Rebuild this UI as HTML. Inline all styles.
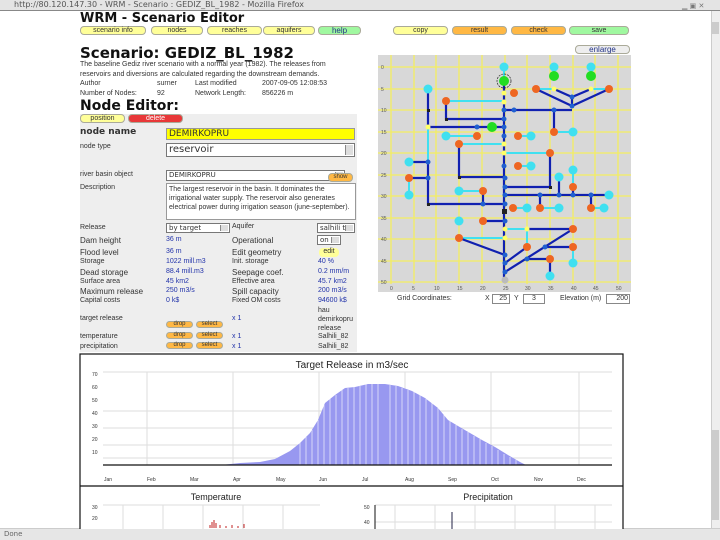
<!DOCTYPE html>
<html><head><style>
*{margin:0;padding:0;box-sizing:border-box}
body{width:720px;height:540px;overflow:hidden;background:#fff;font-family:"DejaVu Sans","Liberation Sans",sans-serif;position:relative;color:#333}
.a{position:absolute;white-space:nowrap}
.s{font-size:7px;font-family:"Liberation Sans",sans-serif}
.b{position:absolute;height:9px;border-radius:4px;border:1px solid #aa9;font-size:7px;text-align:center;line-height:7px;color:#333;font-family:"Liberation Sans",sans-serif}
.y{background:#ffff99}.o{background:#ffb844}.g{background:#a0f8a0}.r{background:#e83838;color:#fff}
.v{color:#23a}
.sel{position:absolute;background:#fff;border:1px solid #777;font-size:8px;padding-left:2px}
.sel:after{content:"";position:absolute;right:1px;top:1px;bottom:1px;width:7px;background:#ddd;border-left:1px solid #888}
</style></head><body>
<div class="a" style="left:0;top:0;width:720px;height:11px;background:#e4e4e4;border-bottom:1px solid #888;font-size:8px;color:#555;padding-left:14px;line-height:10px">http://80.120.147.30 - WRM - Scenario : GEDIZ_BL_1982 - Mozilla Firefox</div>
<div class="a" style="left:682px;top:2px;font-size:7px;color:#777">▁ ▣ ✕</div>
<div class="a" style="left:711px;top:11px;width:9px;height:518px;background:#eee;border-left:1px solid #ccc"></div>
<div class="a" style="left:712px;top:22px;width:7px;height:12px;background:#ccc"></div>
<div class="a" style="left:712px;top:430px;width:7px;height:90px;background:#ccc"></div>
<div class="a" style="left:0;top:528px;width:720px;height:12px;background:#e6e6e6;border-top:1px solid #ccc;font-size:7px;color:#666;padding-left:4px;line-height:11px">Done</div>

<div class="a" style="left:80px;top:11px;font-size:13px;font-weight:bold;color:#111">WRM - Scenario Editor</div>
<div class="b y" style="left:80px;top:26px;width:66px">scenario info</div>
<div class="b y" style="left:151px;top:26px;width:52px">nodes</div>
<div class="b y" style="left:207px;top:26px;width:55px">reaches</div>
<div class="b y" style="left:263px;top:26px;width:52px">aquifers</div>
<div class="b g" style="left:318px;top:26px;width:43px;font-size:8px;color:#238">help</div>
<div class="b y" style="left:393px;top:26px;width:55px">copy</div>
<div class="b o" style="left:452px;top:26px;width:55px">result</div>
<div class="b o" style="left:511px;top:26px;width:55px">check</div>
<div class="b g" style="left:569px;top:26px;width:60px">save</div>
<div class="b" style="left:575px;top:45px;width:55px;background:#eee;color:#238;font-size:8px">enlarge</div>

<div class="a" style="left:80px;top:44px;font-size:15px;font-weight:bold;color:#111">Scenario: GEDIZ_BL_1982</div>
<div class="a s" style="left:80px;top:60px;line-height:10px">The baseline Gediz river scenario with a normal year (1982). The releases from<br>reservoirs and diversions are calculated regarding the downstream demands.</div>
<div class="a s" style="left:80px;top:80px">Author</div><div class="a s" style="left:157px;top:80px">surner</div><div class="a s" style="left:195px;top:80px">Last modified</div><div class="a s" style="left:262px;top:80px">2007-09-05 12:08:53</div>
<div class="a s" style="left:80px;top:90px">Number of Nodes:</div><div class="a s" style="left:157px;top:90px">92</div><div class="a s" style="left:195px;top:90px">Network Length:</div><div class="a s" style="left:262px;top:90px">856226 m</div>
<div class="a" style="left:80px;top:98px;font-size:14px;font-weight:bold;color:#111">Node Editor:</div>

<div class="a" style="left:80px;top:114px;width:277px;height:238px;background:#eee"></div>
<div class="b y" style="left:80px;top:114px;width:45px">position</div>
<div class="b r" style="left:128px;top:114px;width:55px">delete</div>
<div class="a" style="left:80px;top:127px;font-size:9px;font-weight:bold">node name</div>
<div class="a" style="left:166px;top:128px;width:189px;height:12px;background:#ffff00;border:1px solid #999;font-size:9px;padding-left:2px;line-height:10px">DEMIRKOPRU</div>
<div class="a s" style="left:80px;top:143px">node type</div>
<div class="sel" style="left:166px;top:143px;width:189px;height:14px;font-size:10px;line-height:12px">reservoir</div>
<div class="a s" style="left:80px;top:171px">river basin object</div>
<div class="sel" style="left:166px;top:170px;width:179px;height:11px;font-size:7px;line-height:9px">DEMIRKOPRU</div>
<div class="b o" style="left:328px;top:173px;width:25px;font-size:6px">show</div>
<div class="a s" style="left:80px;top:184px">Description</div>
<div class="a s" style="left:166px;top:183px;width:190px;height:37px;background:#fff;border:1px solid #999;line-height:9px;padding:1px 2px;white-space:normal">The largest reservoir in the basin. It dominates the irrigational water supply. The reservoir also generates electrical power during irrigation season (june-september).</div>
<div class="a s" style="left:80px;top:224px">Release</div>
<div class="sel" style="left:166px;top:223px;width:64px;height:10px;font-size:7px;line-height:8px">by target</div>
<div class="a s" style="left:232px;top:223px">Aquifer</div>
<div class="sel" style="left:317px;top:223px;width:38px;height:10px;font-size:7px;line-height:8px">salhili t</div>
<div class="a s" style="left:80px;top:236px;font-size:8px">Dam height</div><div class="a s v" style="left:166px;top:236px">36 m</div>
<div class="a s" style="left:232px;top:236px;font-size:8px">Operational</div>
<div class="sel" style="left:317px;top:235px;width:24px;height:10px;font-size:7px;line-height:8px">on</div>
<div class="a s" style="left:80px;top:248px;font-size:8px">Flood level</div><div class="a s v" style="left:166px;top:248px">36 m</div>
<div class="a s" style="left:232px;top:248px;font-size:8px">Edit geometry</div>
<div class="b y" style="left:319px;top:248px;width:20px;border:none">edit</div>
<div class="a s" style="left:80px;top:258px">Storage</div><div class="a s v" style="left:166px;top:258px">1022 mill.m3</div><div class="a s" style="left:232px;top:258px">Init. storage</div><div class="a s v" style="left:318px;top:258px">40 %</div>
<div class="a s" style="left:80px;top:268px;font-size:8px">Dead storage</div><div class="a s v" style="left:166px;top:268px">88.4 mill.m3</div><div class="a s" style="left:232px;top:268px;font-size:8px">Seepage coef.</div><div class="a s v" style="left:318px;top:268px">0.2 mm/m</div>
<div class="a s" style="left:80px;top:278px">Surface area</div><div class="a s v" style="left:166px;top:278px">45 km2</div><div class="a s" style="left:232px;top:278px">Effective area</div><div class="a s v" style="left:318px;top:278px">45.7 km2</div>
<div class="a s" style="left:80px;top:287px;font-size:8px">Maximum release</div><div class="a s v" style="left:166px;top:287px">250 m3/s</div><div class="a s" style="left:232px;top:287px;font-size:8px">Spill capacity</div><div class="a s v" style="left:318px;top:287px">200 m3/s</div>
<div class="a s" style="left:80px;top:297px">Capital costs</div><div class="a s v" style="left:166px;top:297px">0 k$</div><div class="a s" style="left:232px;top:297px">Fixed OM costs</div><div class="a s v" style="left:318px;top:297px">94600 k$</div>
<div class="a s" style="left:318px;top:306px;line-height:9px">hau<br>demirkopru<br>release</div>
<div class="a s" style="left:80px;top:315px">target release</div><div class="a s v" style="left:232px;top:315px">x 1</div>
<div class="b o" style="left:166px;top:321px;width:27px;height:7px;line-height:5px;font-size:6px">drop</div><div class="b o" style="left:196px;top:321px;width:27px;height:7px;line-height:5px;font-size:6px">select</div>
<div class="a s" style="left:80px;top:333px">temperature</div><div class="a s v" style="left:232px;top:333px">x 1</div><div class="a s" style="left:318px;top:333px">Salhili_82</div>
<div class="b o" style="left:166px;top:332px;width:27px;height:7px;line-height:5px;font-size:6px">drop</div><div class="b o" style="left:196px;top:332px;width:27px;height:7px;line-height:5px;font-size:6px">select</div>
<div class="a s" style="left:80px;top:343px">precipitation</div><div class="a s v" style="left:232px;top:343px">x 1</div><div class="a s" style="left:318px;top:343px">Salhili_82</div>
<div class="b o" style="left:166px;top:342px;width:27px;height:7px;line-height:5px;font-size:6px">drop</div><div class="b o" style="left:196px;top:342px;width:27px;height:7px;line-height:5px;font-size:6px">select</div>

<!-- map -->
<svg class="a" style="left:378px;top:55px" width="253" height="237" viewBox="378 55 253 237">
<rect x="378" y="55" width="253" height="237" fill="#d8d8d8"/>
<g stroke="#f4ee60" stroke-width="1.3">
<line x1="391" y1="55" x2="391" y2="285"/><line x1="414" y1="55" x2="414" y2="285"/><line x1="436" y1="55" x2="436" y2="285"/><line x1="459" y1="55" x2="459" y2="285"/><line x1="482" y1="55" x2="482" y2="285"/><line x1="505" y1="55" x2="505" y2="285"/><line x1="527" y1="55" x2="527" y2="285"/><line x1="550" y1="55" x2="550" y2="285"/><line x1="573" y1="55" x2="573" y2="285"/><line x1="595" y1="55" x2="595" y2="285"/><line x1="618" y1="55" x2="618" y2="285"/>
<line x1="378" y1="67" x2="631" y2="67"/><line x1="378" y1="89" x2="631" y2="89"/><line x1="378" y1="110" x2="631" y2="110"/><line x1="378" y1="132" x2="631" y2="132"/><line x1="378" y1="153" x2="631" y2="153"/><line x1="378" y1="175" x2="631" y2="175"/><line x1="378" y1="196" x2="631" y2="196"/><line x1="378" y1="218" x2="631" y2="218"/><line x1="378" y1="239" x2="631" y2="239"/><line x1="378" y1="261" x2="631" y2="261"/><line x1="378" y1="282" x2="631" y2="282"/>
</g>
<rect x="378" y="284" width="253" height="8" fill="#d8d8d8"/>
<g font-size="5" fill="#555" font-family="Liberation Sans">
<text x="381" y="69">0</text><text x="381" y="91">5</text><text x="381" y="112">10</text><text x="381" y="134">15</text><text x="381" y="155">20</text><text x="381" y="177">25</text><text x="381" y="198">30</text><text x="381" y="220">35</text><text x="381" y="241">40</text><text x="381" y="263">45</text><text x="381" y="284">50</text>
<text x="390" y="290">0</text><text x="412" y="290">5</text><text x="434" y="290">10</text><text x="457" y="290">15</text><text x="480" y="290">20</text><text x="503" y="290">25</text><text x="525" y="290">30</text><text x="548" y="290">35</text><text x="571" y="290">40</text><text x="593" y="290">45</text><text x="616" y="290">50</text>
</g>
<g stroke="#40e0f0" stroke-width="2" fill="none">
<path d="M536 89H554M591 89H609M446 101H504M428 127V162M477 136H446M518 136H531M459 144H504M504 153H550M518 166H531M409 178V195M573 170V187M459 191H483M513 208H527M540 208H559M591 208H604M505 229H527M459 238H505M527 229V247M573 247V263M554 132H573M554 67V76M591 67V76M504 67V81"/>
</g>
<g stroke="#1020b0" stroke-width="2.2" fill="none">
<path d="M504 81V280M504 110H572M536 89L572 106L609 89M554 89L572 97L591 89M572 97V106M428 89V127M446 101V119H504M428 127H504M554 110V132M459 144V178M550 153V187M409 162H428M409 178H428M428 178V204H504M459 177H504M505 187H550M505 195H609M559 178V195M573 187V195M483 191V204M540 195V208M591 195V208M483 221H505M527 229H573M459 238L505 255M505 263L527 247M505 272L573 229M545 247H573M527 259H550V276M428 162V178"/>
</g>
<g fill="#40e0f0">
<circle cx="504" cy="67" r="4.5"/><circle cx="554" cy="67" r="4.5"/><circle cx="591" cy="67" r="4.5"/><circle cx="428" cy="89" r="4.5"/><circle cx="446" cy="136" r="4.5"/><circle cx="531" cy="136" r="4.5"/><circle cx="573" cy="132" r="4.5"/><circle cx="409" cy="162" r="4.5"/><circle cx="531" cy="166" r="4.5"/><circle cx="559" cy="177" r="4.5"/><circle cx="573" cy="170" r="4.5"/><circle cx="409" cy="195" r="4.5"/><circle cx="609" cy="195" r="4.5"/><circle cx="459" cy="191" r="4.5"/><circle cx="527" cy="208" r="4.5"/><circle cx="559" cy="208" r="4.5"/><circle cx="604" cy="208" r="4.5"/><circle cx="459" cy="221" r="4.5"/><circle cx="573" cy="263" r="4.5"/><circle cx="550" cy="276" r="4.5"/>
</g>
<g fill="#22dd22"><circle cx="504" cy="81" r="5"/><circle cx="554" cy="76" r="5"/><circle cx="591" cy="76" r="5"/><circle cx="492" cy="127" r="5"/></g>
<circle cx="504" cy="81" r="7" fill="none" stroke="#222" stroke-width=".7" stroke-dasharray="2 1"/>
<g fill="#ee6622">
<circle cx="514" cy="93" r="4"/><circle cx="536" cy="89" r="4"/><circle cx="609" cy="89" r="4"/><circle cx="446" cy="101" r="4"/><circle cx="477" cy="136" r="4"/><circle cx="518" cy="136" r="4"/><circle cx="554" cy="132" r="4"/><circle cx="459" cy="144" r="4"/><circle cx="550" cy="153" r="4"/><circle cx="518" cy="166" r="4"/><circle cx="409" cy="178" r="4"/><circle cx="573" cy="187" r="4"/><circle cx="483" cy="191" r="4"/><circle cx="513" cy="208" r="4"/><circle cx="540" cy="208" r="4"/><circle cx="591" cy="208" r="4"/><circle cx="483" cy="221" r="4"/><circle cx="573" cy="229" r="4"/><circle cx="459" cy="238" r="4"/><circle cx="527" cy="247" r="4"/><circle cx="573" cy="247" r="4"/><circle cx="550" cy="259" r="4"/>
</g>
<g fill="#2060d0">
<circle cx="572" cy="97" r="2.5"/><circle cx="572" cy="106" r="2.5"/><circle cx="504" cy="110" r="2.5"/><circle cx="514" cy="110" r="2.5"/><circle cx="554" cy="110" r="2.5"/><circle cx="477" cy="127" r="2.5"/><circle cx="504" cy="119" r="2.5"/><circle cx="504" cy="127" r="2.5"/><circle cx="504" cy="136" r="2.5"/><circle cx="504" cy="166" r="2.5"/><circle cx="428" cy="162" r="2.5"/><circle cx="428" cy="178" r="2.5"/><circle cx="505" cy="178" r="2.5"/><circle cx="505" cy="187" r="2.5"/><circle cx="505" cy="195" r="2.5"/><circle cx="505" cy="204" r="2.5"/><circle cx="505" cy="221" r="2.5"/><circle cx="540" cy="195" r="2.5"/><circle cx="559" cy="195" r="2.5"/><circle cx="573" cy="195" r="2.5"/><circle cx="591" cy="195" r="2.5"/><circle cx="483" cy="204" r="2.5"/><circle cx="505" cy="255" r="2.5"/><circle cx="505" cy="263" r="2.5"/><circle cx="505" cy="272" r="2.5"/><circle cx="545" cy="247" r="2.5"/><circle cx="527" cy="259" r="2.5"/>
</g>
<g fill="#ffff66"><circle cx="504" cy="93" r="2.5"/><circle cx="504" cy="102" r="2.5"/><circle cx="554" cy="89" r="2.5"/><circle cx="591" cy="89" r="2.5"/><circle cx="428" cy="127" r="2.5"/><circle cx="504" cy="144" r="2.5"/><circle cx="504" cy="153" r="2.5"/><circle cx="505" cy="229" r="2.5"/><circle cx="527" cy="229" r="2.5"/><circle cx="505" cy="238" r="2.5"/></g>
<g fill="#222"><rect x="427" y="109" width="3" height="3"/><rect x="445" y="118" width="3" height="3"/><rect x="458" y="176" width="3" height="3"/><rect x="549" y="186" width="3" height="3"/><rect x="427" y="203" width="3" height="3"/><rect x="502" y="209" width="5" height="5"/></g>
<circle cx="505" cy="280" r="3.5" fill="#bbb"/>
</svg>
<div class="a s" style="left:397px;top:295px">Grid Coordinates:</div>
<div class="a s" style="left:485px;top:295px">X</div><div class="a s" style="left:492px;top:294px;width:18px;height:10px;border:1px solid #888;text-align:right;padding-right:2px">25</div>
<div class="a s" style="left:514px;top:295px">Y</div><div class="a s" style="left:523px;top:294px;width:22px;height:10px;border:1px solid #888;text-align:center">3</div>
<div class="a s" style="left:560px;top:295px">Elevation (m)</div><div class="a s" style="left:606px;top:294px;width:24px;height:10px;border:1px solid #888;text-align:right;padding-right:1px">200</div>

<!-- charts -->
<svg class="a" style="left:79px;top:353px" width="545" height="176" viewBox="79 353 545 176">
<rect x="80" y="354" width="543" height="180" fill="#fff" stroke="#111" stroke-width="1.2"/>
<line x1="80" y1="486" x2="623" y2="486" stroke="#111" stroke-width="1.2"/>
<text x="352" y="368" font-size="10" text-anchor="middle" font-family="Liberation Sans" fill="#222">Target Release in m3/sec</text>
<g stroke="#ddd" stroke-width="1">
<line x1="103" y1="372" x2="612" y2="372"/><line x1="103" y1="411" x2="612" y2="411"/><line x1="103" y1="445" x2="612" y2="445"/><line x1="103" y1="428" x2="612" y2="428"/><line x1="103" y1="458" x2="612" y2="458"/>
<line x1="147" y1="372" x2="147" y2="465"/><line x1="233" y1="372" x2="233" y2="465"/><line x1="319" y1="372" x2="319" y2="465"/><line x1="405" y1="372" x2="405" y2="465"/><line x1="491" y1="372" x2="491" y2="465"/><line x1="579" y1="372" x2="579" y2="465"/>
</g>
<path d="M221 465 L240 463 L260 462 L275 459 L290 451 L300 443 L310 433 L318 420 L325 403 L335 395 L345 388 L355 387 L368 384 L385 384 L398 386 L412 391 L425 398 L438 408 L448 420 L458 426 L470 433 L482 440 L495 447 L508 455 L520 462 L526 465 Z" fill="#9898f0"/>
<g stroke="#fff" stroke-width=".6">
<path d="M300 440V465M306 437V465M312 430V465M318 420V465M324 405V465M330 398V465M336 395V465M342 390V465M348 388V465M354 387V465M360 386V465M366 384V465M372 384V465M378 384V465M390 385V465M396 386V465M402 388V465M408 390V465M414 392V465M420 395V465M426 399V465M432 403V465M438 408V465M444 415V465M450 421V465M456 425V465M462 429V465M468 432V465M474 436V465M480 439V465M486 443V465M492 446V465M498 450V465M504 454V465M510 457V465M516 460V465"/>
</g>
<line x1="103" y1="465" x2="612" y2="465" stroke="#111" stroke-width="1.2"/>
<g font-size="5" fill="#333" font-family="Liberation Sans">
<text x="92" y="376">70</text><text x="92" y="389">60</text><text x="92" y="402">50</text><text x="92" y="415">40</text><text x="92" y="428">30</text><text x="92" y="441">20</text><text x="92" y="454">10</text>
<text x="104" y="481">Jan</text><text x="147" y="481">Feb</text><text x="190" y="481">Mar</text><text x="233" y="481">Apr</text><text x="276" y="481">May</text><text x="319" y="481">Jun</text><text x="362" y="481">Jul</text><text x="405" y="481">Aug</text><text x="448" y="481">Sep</text><text x="491" y="481">Oct</text><text x="534" y="481">Nov</text><text x="577" y="481">Dec</text>
</g>
<text x="216" y="500" font-size="9" text-anchor="middle" font-family="Liberation Sans" fill="#222">Temperature</text>
<text x="488" y="500" font-size="9" text-anchor="middle" font-family="Liberation Sans" fill="#222">Precipitation</text>
<g stroke="#ddd"><line x1="103" y1="505" x2="320" y2="505"/><line x1="375" y1="505" x2="612" y2="505"/><line x1="375" y1="522" x2="612" y2="522"/>
<line x1="123" y1="505" x2="123" y2="530"/><line x1="163" y1="505" x2="163" y2="530"/><line x1="203" y1="505" x2="203" y2="530"/><line x1="243" y1="505" x2="243" y2="530"/><line x1="283" y1="505" x2="283" y2="530"/>
<line x1="395" y1="505" x2="395" y2="530"/><line x1="435" y1="505" x2="435" y2="530"/><line x1="475" y1="505" x2="475" y2="530"/><line x1="515" y1="505" x2="515" y2="530"/><line x1="555" y1="505" x2="555" y2="530"/><line x1="595" y1="505" x2="595" y2="530"/></g>
<line x1="375" y1="505" x2="375" y2="530" stroke="#111"/>
<line x1="452" y1="512" x2="452" y2="530" stroke="#224" stroke-width="1"/>
<g stroke="#c02020" stroke-width="1"><path d="M210 528V525M212 528V522M214 528V520M216 528V523M220 528V525M226 528V526M232 528V525M238 528V526M244 528V524"/></g>
<g font-size="5" fill="#333" font-family="Liberation Sans"><text x="92" y="509">30</text><text x="92" y="520">20</text><text x="364" y="509">50</text><text x="364" y="524">40</text></g>
</svg>
</body></html>
